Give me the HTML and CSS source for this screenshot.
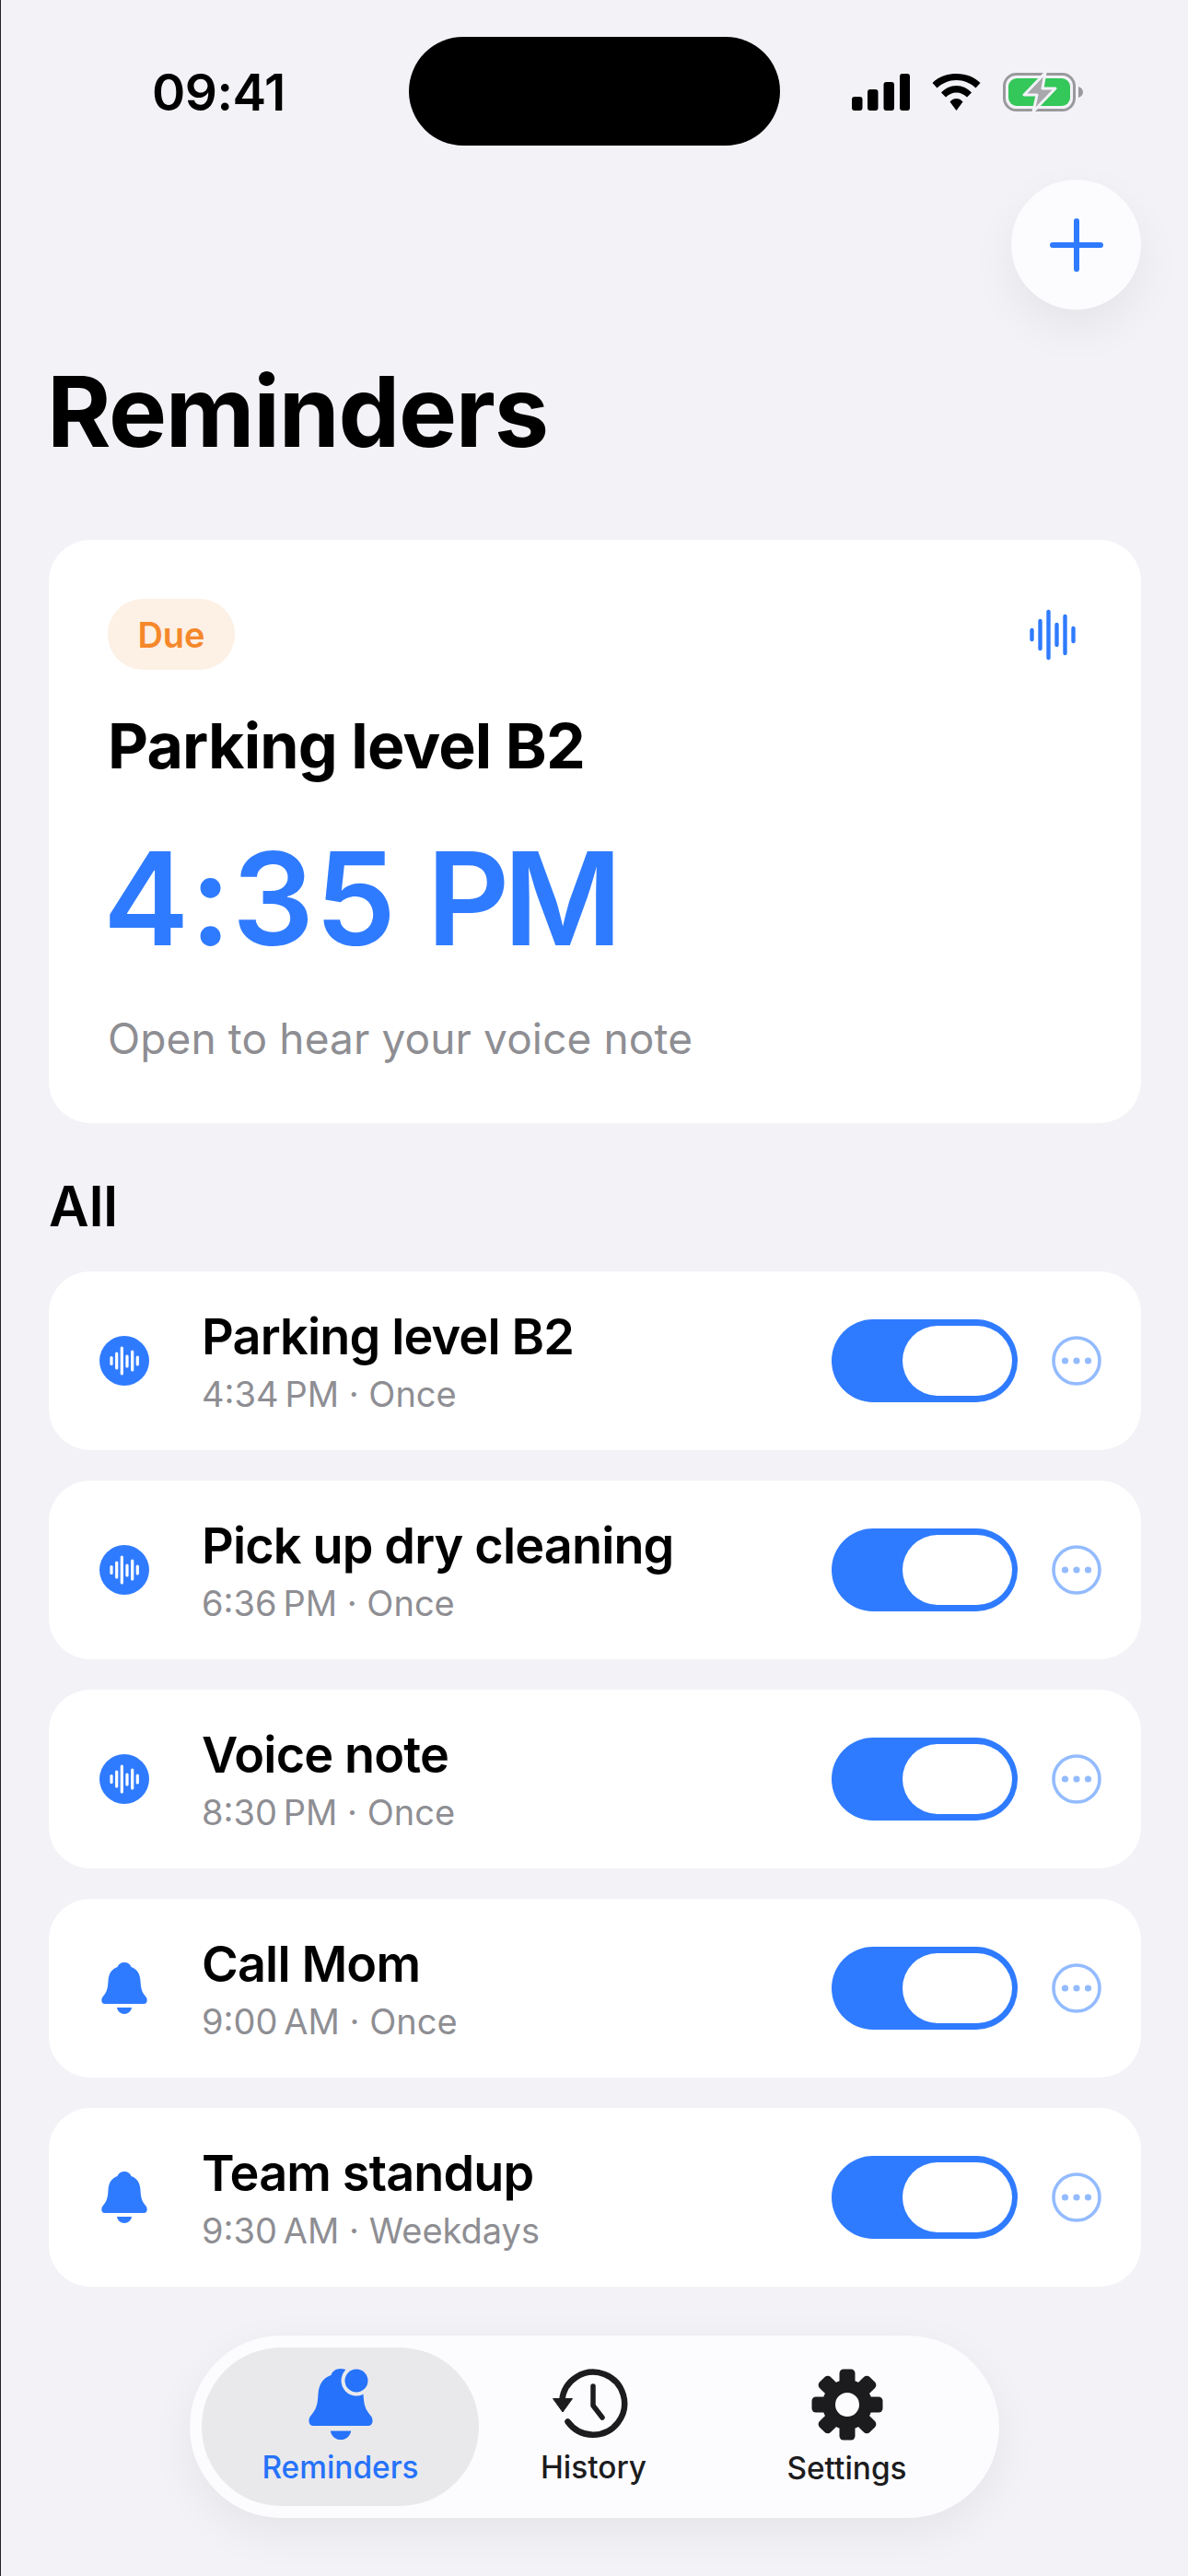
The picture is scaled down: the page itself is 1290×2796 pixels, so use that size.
FILE: index.html
```html
<!DOCTYPE html>
<html lang="en">
<head>
    <meta charset="UTF-8">
    <meta name="viewport" content="width=device-width, initial-scale=1.0">
    <title>Reminders</title>
    <link rel="stylesheet" href="styles.css">
</head>
<body>
    <svg class="icon-defs" width="0" height="0">
        <symbol id="bell" viewBox="0 0 50 56">
            <path d="M25 0C21 0 18.5 2 17.5 5C10.5 7.5 8 13 7.5 20C7 29 6 32 1.5 37.5C-.5 40 0 45 3.5 45H46.5C50 45 50.5 40 48.5 37.5C44 32 43 29 42.5 20C42 13 39.5 7.5 32.5 5C31.5 2 29 0 25 0Z"/>
            <path d="M17 49H33C32.5 53 29 56 25 56C21 56 17.5 53 17 49Z"/>
        </symbol>
        <symbol id="voice" viewBox="0 0 54 54">
            <circle cx="27" cy="27" r="27" fill="#2f7bff"/>
            <g stroke="#fff" stroke-width="3.2" stroke-linecap="round">
                <path d="M13 23.5V30.5"/>
                <path d="M18.7 19V35"/>
                <path d="M24.3 13V41"/>
                <path d="M30 22V33"/>
                <path d="M35.7 17V37"/>
                <path d="M41.3 23V31"/>
            </g>
        </symbol>
        <symbol id="more" viewBox="0 0 54 54">
            <circle cx="27" cy="27" r="25" fill="none" stroke="#93bbff" stroke-width="3.6"/>
            <circle cx="14.5" cy="27" r="3.6" fill="#93bbff"/>
            <circle cx="27" cy="27" r="3.6" fill="#93bbff"/>
            <circle cx="39.5" cy="27" r="3.6" fill="#93bbff"/>
        </symbol>
    </svg>

    <div class="page">
        <div class="status-bar">
            <span class="clock">09:41</span>
            <span class="island"></span>
            <div class="status-icons">
                <svg width="63" height="40" viewBox="0 0 63 40">
                    <rect x="0" y="25" width="11.5" height="15" rx="3"/>
                    <rect x="17" y="17" width="11.5" height="23" rx="3"/>
                    <rect x="34.5" y="9" width="11.5" height="31" rx="3"/>
                    <rect x="52" y="0" width="11" height="40" rx="3"/>
                </svg>
                <svg class="wifi" width="53" height="40" viewBox="0 0 53 40">
                    <path d="M.5 10C7 3.5 16 0 26.5 0C37 0 46 3.5 52.5 10L47.5 15.5C41.5 10 34.5 7 26.5 7C18.5 7 11.5 10 5.5 15.5Z"/>
                    <path d="M10 20.5C14 16 20 13 26.5 13C33 13 39 16 43 20.5L38 25.5C35 22.5 31 20.5 26.5 20.5C22 20.5 18 22.5 15 25.5Z"/>
                    <path d="M19.5 30.5C21.5 28 24 27 26.5 27C29 27 31.5 28 33.5 30.5L26.5 40Z"/>
                </svg>
                <svg class="battery" width="88" height="42" viewBox="0 0 88 42">
                    <rect x="1.5" y="1.5" width="76" height="39" rx="13" fill="none" stroke="#9a9a9e" stroke-width="3"/>
                    <rect x="6" y="6" width="67" height="30" rx="9" fill="#34c759"/>
                    <path d="M82 15C85 16 87 18 87 21C87 24 85 26 82 27Z" fill="#9a9a9e"/>
                    <path d="M46 0L23 24H37L33 42L57 17H43Z" fill="#a8a8ac" stroke="#f2f2f7" stroke-width="3" stroke-linejoin="round"/>
                </svg>
            </div>
        </div>

        <div class="top-actions">
            <button class="add-btn" type="button">
                <svg width="58" height="58" viewBox="0 0 58 58">
                    <path d="M29 3V55M3 29H55" stroke="#2f7bff" stroke-width="6" stroke-linecap="round"/>
                </svg>
            </button>
        </div>

        <h1 class="page-title">Reminders</h1>

        <section class="due-card">
            <div class="due-head">
                <span class="due-pill">Due</span>
                <svg class="due-wave" width="50" height="56" viewBox="0 0 50 56">
                    <g stroke="#2f7bff" stroke-width="4.4" stroke-linecap="round">
                        <path d="M2.5 23V33"/>
                        <path d="M11.5 13V43"/>
                        <path d="M20.5 3V53"/>
                        <path d="M29.5 17V39"/>
                        <path d="M38.5 8V48"/>
                        <path d="M47.5 21V35"/>
                    </g>
                </svg>
            </div>
            <h2 class="due-title">Parking level B2</h2>
            <div class="due-time">4:35 <span class="meridiem">PM</span></div>
            <p class="due-hint">Open to hear your voice note</p>
        </section>

        <h3 class="section-label">All</h3>

        <div class="reminder-list">
            <div class="reminder">
                <svg class="kind-icon"><use href="#voice"/></svg>
                <div class="reminder-text">
                    <div class="reminder-title">Parking level B2</div>
                    <div class="reminder-sub">4:34&#8239;PM · Once</div>
                </div>
                <span class="toggle"><span class="knob"></span></span>
                <svg class="more-icon"><use href="#more"/></svg>
            </div>
            <div class="reminder">
                <svg class="kind-icon"><use href="#voice"/></svg>
                <div class="reminder-text">
                    <div class="reminder-title">Pick up dry cleaning</div>
                    <div class="reminder-sub">6:36&#8239;PM · Once</div>
                </div>
                <span class="toggle"><span class="knob"></span></span>
                <svg class="more-icon"><use href="#more"/></svg>
            </div>
            <div class="reminder">
                <svg class="kind-icon"><use href="#voice"/></svg>
                <div class="reminder-text">
                    <div class="reminder-title">Voice note</div>
                    <div class="reminder-sub">8:30&#8239;PM · Once</div>
                </div>
                <span class="toggle"><span class="knob"></span></span>
                <svg class="more-icon"><use href="#more"/></svg>
            </div>
            <div class="reminder">
                <svg class="kind-icon bell-icon"><use href="#bell"/></svg>
                <div class="reminder-text">
                    <div class="reminder-title">Call Mom</div>
                    <div class="reminder-sub">9:00&#8239;AM · Once</div>
                </div>
                <span class="toggle"><span class="knob"></span></span>
                <svg class="more-icon"><use href="#more"/></svg>
            </div>
            <div class="reminder">
                <svg class="kind-icon bell-icon"><use href="#bell"/></svg>
                <div class="reminder-text">
                    <div class="reminder-title">Team standup</div>
                    <div class="reminder-sub">9:30&#8239;AM · Weekdays</div>
                </div>
                <span class="toggle"><span class="knob"></span></span>
                <svg class="more-icon"><use href="#more"/></svg>
            </div>
        </div>

        <nav class="tab-bar">
            <a class="tab active" href="#">
                <svg width="70" height="77" viewBox="0 0 70 77">
                    <g fill="#2672fa" transform="scale(1.4 1.375)">
                        <path d="M25 0C21 0 18.5 2 17.5 5C10.5 7.5 8 13 7.5 20C7 29 6 32 1.5 37.5C-.5 40 0 45 3.5 45H46.5C50 45 50.5 40 48.5 37.5C44 32 43 29 42.5 20C42 13 39.5 7.5 32.5 5C31.5 2 29 0 25 0Z"/>
                        <path d="M17 49H33C32.5 53 29 56 25 56C21 56 17.5 53 17 49Z"/>
                    </g>
                    <circle cx="52" cy="13" r="16.5" fill="#e9e9ec"/>
                    <circle cx="52" cy="13" r="12.5" fill="#2672fa"/>
                </svg>
                <span>Reminders</span>
            </a>
            <a class="tab" href="#">
                <svg class="history-icon" width="82" height="77" viewBox="0 0 82 77">
                    <path d="M10.200 35A34 34 0 1 1 16.500 57.500" fill="none" stroke="#1c1c1e" stroke-width="6.500" stroke-linecap="round"/>
                    <path d="M.5 32.500H21.500L11 47Z" fill="#1c1c1e" stroke="#1c1c1e" stroke-width="1" stroke-linejoin="round"/>
                    <path d="M44 19V40L54 53" fill="none" stroke="#1c1c1e" stroke-width="5.500" stroke-linecap="round" stroke-linejoin="round"/>
                </svg>
                <span>History</span>
            </a>
            <a class="tab" href="#">
                <svg width="78" height="78" viewBox="-39 -39 78 78">
                    <circle r="20" fill="none" stroke="#1c1c1e" stroke-width="14"/>
                    <g fill="#1c1c1e">
                        <rect x="-8.500" y="-38.500" width="17" height="18" rx="4.500"/>
                        <rect x="-8.500" y="-38.500" width="17" height="18" rx="4.500" transform="rotate(45)"/>
                        <rect x="-8.500" y="-38.500" width="17" height="18" rx="4.500" transform="rotate(90)"/>
                        <rect x="-8.500" y="-38.500" width="17" height="18" rx="4.500" transform="rotate(135)"/>
                        <rect x="-8.500" y="-38.500" width="17" height="18" rx="4.500" transform="rotate(180)"/>
                        <rect x="-8.500" y="-38.500" width="17" height="18" rx="4.500" transform="rotate(225)"/>
                        <rect x="-8.500" y="-38.500" width="17" height="18" rx="4.500" transform="rotate(270)"/>
                        <rect x="-8.500" y="-38.500" width="17" height="18" rx="4.500" transform="rotate(315)"/>
                    </g>
                </svg>
                <span>Settings</span>
            </a>
        </nav>
    </div>
</body>
</html>
```

FILE: styles.css
```css
/* General Styles */
html, body {
    margin: 0;
    padding: 0;
    height: 100%;
}

body {
    font-family: 'Inter', 'Noto Sans', sans-serif;
    background-color: #f2f2f7;
    color: #000;
    overflow: hidden;
}

.icon-defs {
    display: block;
}

.page {
    height: 2796px;
    box-sizing: border-box;
    padding: 40px 51px 0 52px;
    border-left: 1px solid #222;
}

/* Status bar */
.status-bar {
    display: grid;
    grid-template-columns: 391px 403px 1fr;
    height: 118px;
}

.clock {
    padding-left: 112px;
    font-size: 55px;
    line-height: 40px;
    height: 40px;
    margin-top: 40px;
    font-weight: 600;
    letter-spacing: -0.5px;
}

.island {
    background-color: #000;
    border-radius: 59px;
}

.status-icons {
    display: flex;
    align-items: flex-start;
    padding: 39px 0 0 78px;
}

.status-icons svg {
    flex: none;
    margin-top: 1px;
}

.status-icons .wifi {
    margin-left: 24px;
}

.status-icons .battery {
    margin-left: 24px;
    margin-top: 0;
}

/* Add button */
.top-actions {
    display: flex;
    justify-content: flex-end;
    margin-top: 37px;
}

.add-btn {
    width: 141px;
    height: 141px;
    display: flex;
    align-items: center;
    justify-content: center;
    border: none;
    padding: 0;
    border-radius: 50%;
    background-color: #fcfcfe;
    box-shadow: 0 20px 50px rgba(0, 0, 0, 0.06);
}

.page-title {
    margin: 49px 0 0 -2px;
    font-size: 106px;
    line-height: 124px;
    font-weight: 700;
    letter-spacing: -1.3px;
}

/* Due card */
.due-card {
    margin-top: 77px;
    height: 633px;
    box-sizing: border-box;
    padding: 64px 64px 0;
    background-color: #fff;
    border-radius: 45px;
}

.due-head {
    display: flex;
    justify-content: space-between;
    align-items: center;
    height: 77px;
}

.due-pill {
    display: flex;
    align-items: center;
    justify-content: center;
    width: 138px;
    height: 77px;
    border-radius: 38px;
    background-color: #fdf0e4;
    color: #f5882a;
    font-size: 38px;
    font-weight: 600;
}

.due-wave {
    margin-right: 7px;
}

.due-title {
    margin: 41px 0 0;
    font-size: 68px;
    line-height: 82px;
    font-weight: 700;
    letter-spacing: -0.8px;
}

.due-time {
    margin: 40px 0 0 -5px;
    font-size: 140px;
    line-height: 170px;
    font-weight: 600;
    letter-spacing: 1px;
    word-spacing: -4px;
    color: #2f7bff;
}

.meridiem {
    letter-spacing: -7px;
}

.due-hint {
    margin: 40px 0 0;
    font-size: 46px;
    line-height: 54px;
    letter-spacing: 0.12px;
    color: #8e8e93;
}

/* List */
.section-label {
    margin: 54px 0 0;
    font-size: 60px;
    line-height: 72px;
    font-weight: 600;
}

.reminder-list {
    display: flex;
    flex-direction: column;
    gap: 33px;
    margin-top: 35px;
}

.reminder {
    display: flex;
    align-items: center;
    height: 194px;
    box-sizing: border-box;
    padding: 0 43px 0 55px;
    background-color: #fff;
    border-radius: 45px;
}

.kind-icon {
    flex: none;
    width: 54px;
    height: 54px;
}

.bell-icon {
    fill: #2f7bff;
    height: 56px;
}

.reminder-text {
    flex: 1;
    min-width: 0;
    margin-left: 57px;
}

.reminder-title {
    font-size: 54px;
    line-height: 64px;
    font-weight: 600;
    letter-spacing: -0.85px;
}

.reminder-sub {
    margin-top: 8px;
    font-size: 38px;
    line-height: 44px;
    color: #8e8e93;
}

.toggle {
    flex: none;
    display: flex;
    justify-content: flex-end;
    align-items: center;
    width: 202px;
    height: 90px;
    box-sizing: border-box;
    padding-right: 6px;
    border-radius: 45px;
    background-color: #2f7bff;
}

.knob {
    width: 119px;
    height: 76px;
    border-radius: 38px;
    background-color: #fff;
}

.more-icon {
    flex: none;
    width: 54px;
    height: 54px;
    margin-left: 37px;
}

/* Tab bar */
.tab-bar {
    display: flex;
    width: 879px;
    height: 198px;
    box-sizing: border-box;
    margin: 53px 0 0 153px;
    padding: 13px;
    border-radius: 99px;
    background-color: #fcfcfe;
    box-shadow: 0 16px 50px rgba(0, 0, 0, 0.06);
}

.tab {
    flex: none;
    display: flex;
    flex-direction: column;
    align-items: center;
    justify-content: center;
    width: 275px;
    color: #1c1c1e;
    text-decoration: none;
    font-size: 33.4px;
    line-height: 38px;
    font-weight: 500;
}

.tab span {
    margin-top: 11px;
}

.history-icon {
    margin-right: 7px;
}

.tab.active {
    width: 301px;
    margin-right: -13px;
    border-radius: 86px;
    background-color: #e9e9ec;
    color: #2672fa;
}
```
